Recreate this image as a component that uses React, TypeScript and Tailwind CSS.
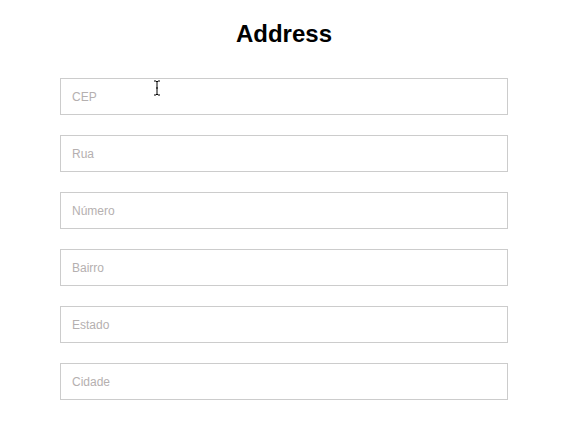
import React from 'react';

const fields = ['CEP', 'Rua', 'Número', 'Bairro', 'Estado', 'Cidade'];

export default function App() {
  return (
    <div className="relative w-[576px] h-[434px] bg-white overflow-hidden" style={{ fontFamily: '"Liberation Sans", Arial, sans-serif' }}>
      <h1 className="pt-[20px] ml-[60px] w-[448px] text-center text-[24px] leading-[28px] font-bold text-black">
        Address
      </h1>
      <form className="ml-[60px] mt-[30px] w-[448px] flex flex-col gap-[20px]">
        {fields.map(field => (
          <input
            key={field}
            type="text"
            placeholder={field}
            className="h-[37px] w-full border border-[#cccccc] bg-white px-[11px] text-[12px] text-gray-800 placeholder:text-[#b5b0b0] outline-none"
          />
        ))}
      </form>
      <svg
        className="absolute left-[153px] top-[80px]"
        width="8"
        height="16"
        viewBox="0 0 8 16"
      >
        <path d="M1 1h2l1 1 1-1h2M4 2v12M1 15h2l1-1 1 1h2M3 8h2" fill="none" stroke="#000" strokeWidth="1" />
      </svg>
    </div>
  );
}
